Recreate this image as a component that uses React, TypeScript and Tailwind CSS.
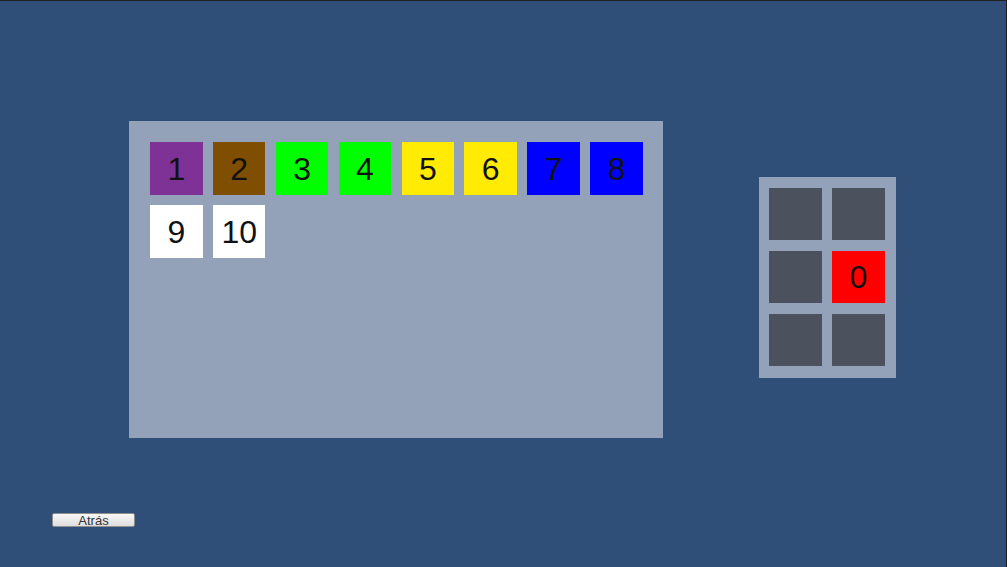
const tiles = [
  { n: "1", c: "bg-[#7f3296]" },
  { n: "2", c: "bg-[#7f4e00]" },
  { n: "3", c: "bg-[#00ff00]" },
  { n: "4", c: "bg-[#00ff00]" },
  { n: "5", c: "bg-[#ffeb04]" },
  { n: "6", c: "bg-[#ffeb04]" },
  { n: "7", c: "bg-[#0000ff]" },
  { n: "8", c: "bg-[#0000ff]" },
  { n: "9", c: "bg-white" },
  { n: "10", c: "bg-white" },
];

const slots = ["", "", "", "0", "", ""];

const App = () => {
  return (
    <div
      className="w-full h-[567px] bg-[#2f4e78] border-t border-r border-[#1f1f1f] overflow-hidden flex flex-col"
      style={{ fontFamily: '"Liberation Sans", Arial, sans-serif' }}
    >
      <div className="flex items-start pt-[120px] pl-[129px]">
        <div className="w-[534px] h-[317px] bg-[#93a2b9] pt-[21px] pl-[21px]">
          <div className="grid grid-cols-[repeat(8,52.6px)] auto-rows-[53px] gap-x-[10.3px] gap-y-[10px]">
            {tiles.map((t) => (
              <div
                key={t.n}
                className={`${t.c} flex items-center justify-center text-[32px] text-[#111] leading-none`}
              >
                {t.n}
              </div>
            ))}
          </div>
        </div>

        <div className="ml-[96px] mt-[56px] w-[137px] h-[201px] bg-[#93a2b9] pt-[11px] pl-[10px]">
          <div className="grid grid-cols-[repeat(2,53px)] auto-rows-[52px] gap-x-[10px] gap-y-[11px]">
            {slots.map((s, i) => (
              <div
                key={i}
                className={`${s ? "bg-[#ff0000]" : "bg-[#4c525d]"} flex items-center justify-center text-[32px] text-[#111] leading-none`}
              >
                {s}
              </div>
            ))}
          </div>
        </div>
      </div>

      <div className="pl-[52px] mt-[75px]">
        <button className="w-[83px] h-[14px] rounded-[2px] border border-[#8e8e8e] bg-gradient-to-b from-[#f7f7f7] to-[#dedede] text-[13px] leading-none text-[#333] flex items-center justify-center">
          Atrás
        </button>
      </div>
    </div>
  );
};

export default App;
